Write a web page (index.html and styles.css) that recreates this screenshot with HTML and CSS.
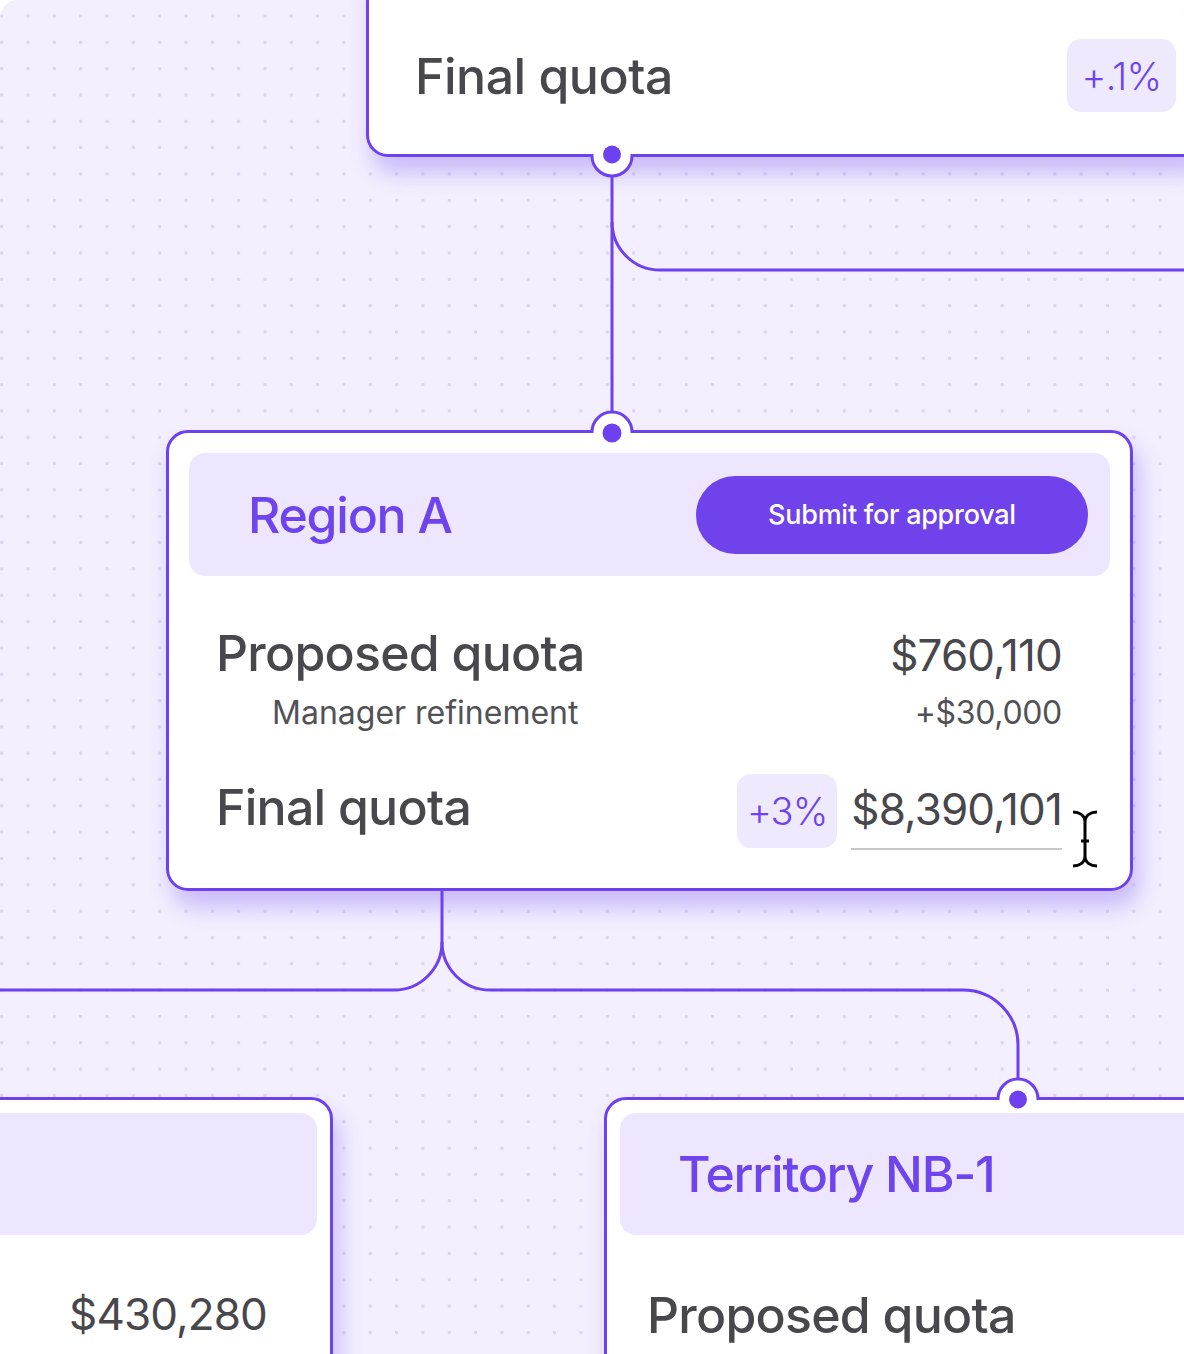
FILE: index.html
```html
<!DOCTYPE html>
<html lang="en">
<head>
<meta charset="utf-8">
<title>Quota flow</title>
<link rel="stylesheet" href="styles.css">
</head>
<body>
<div class="canvas">
  <svg class="wires" width="1184" height="1354" viewBox="0 0 1184 1354" aria-hidden="true">
    <path d="M612 155 V432" />
    <path d="M612 222 A48 48 0 0 0 660 270 H1200" />
    <path d="M442 889 V942 A48 48 0 0 1 394 990 H-20" />
    <path d="M442 942 A48 48 0 0 0 490 990 H963 A55 55 0 0 1 1018 1045 V1098" />
  </svg>

  <section class="card card-top">
    <h2 class="label label-top">Final quota</h2>
    <span class="badge badge-top">+.1%</span>
    <svg class="node node-down" width="50" height="50" viewBox="-25 -25 50 50" aria-hidden="true">
      <path d="M-20 0 A20 20 0 0 0 20 0 Z" fill="#fff"/>
      <rect x="-18.5" y="-2" width="37" height="4" fill="#fff"/>
      <path d="M-20 0 A20 20 0 0 0 20 0" fill="none" stroke="#6d41ef" stroke-width="3"/>
      <circle r="9" cy="-1.5" fill="#6d41ef"/>
    </svg>
  </section>

  <section class="card card-region">
    <svg class="node node-up node-region" width="50" height="50" viewBox="-25 -25 50 50" aria-hidden="true">
      <path d="M-20 0 A20 20 0 0 1 20 0 Z" fill="#fff"/>
      <rect x="-18.5" y="-2" width="37" height="4" fill="#fff"/>
      <path d="M-20 0 A20 20 0 0 1 20 0" fill="none" stroke="#6d41ef" stroke-width="3"/>
      <circle r="9.5" cy="1" fill="#6d41ef"/>
    </svg>
    <header class="card-head head-region">
      <h3 class="head-title">Region A</h3>
      <button class="btn" type="button">Submit for approval</button>
    </header>
    <div class="rows">
      <div class="row row-a">
        <span class="label">Proposed quota</span>
        <span class="value">$760,110</span>
      </div>
      <div class="row row-b">
        <span class="sub">Manager refinement</span>
        <span class="sub-value">+$30,000</span>
      </div>
      <div class="row row-c">
        <span class="label">Final quota</span>
        <span class="final-val">
          <span class="badge badge-final">+3%</span>
          <span class="value editable">$8,390,101</span>
          <svg class="ibeam" width="28" height="60" viewBox="0 0 28 60" aria-hidden="true">
            <path d="M2 3 C8 3 14 6 14 13 C14 6 20 3 26 3 M14 13 V47 M10 32 H18 M2 57 C8 57 14 54 14 47 C14 54 20 57 26 57" fill="none" stroke="#000" stroke-width="3"/>
          </svg>
        </span>
      </div>
    </div>
  </section>

  <section class="card card-left">
    <header class="card-head head-small"></header>
    <div class="left-body">
      <span class="value">$430,280</span>
    </div>
  </section>

  <section class="card card-territory">
    <svg class="node node-up node-territory" width="50" height="50" viewBox="-25 -25 50 50" aria-hidden="true">
      <path d="M-20 0 A20 20 0 0 1 20 0 Z" fill="#fff"/>
      <rect x="-18.5" y="-2" width="37" height="4" fill="#fff"/>
      <path d="M-20 0 A20 20 0 0 1 20 0" fill="none" stroke="#6d41ef" stroke-width="3"/>
      <circle r="9" cy="0.5" fill="#6d41ef"/>
    </svg>
    <header class="card-head head-small head-territory">
      <h3 class="head-title">Territory NB-1</h3>
    </header>
    <div class="territory-body">
      <span class="label">Proposed quota</span>
    </div>
  </section>
</div>
</body>
</html>
```

FILE: styles.css
```css
html, body {
  margin: 0;
  padding: 0;
  background: #ffffff;
}

body {
  font-family: "Inter", "Noto Sans", "Liberation Sans", sans-serif;
}

.canvas {
  position: relative;
  z-index: 0;
  width: 1184px;
  height: 1354px;
  overflow: hidden;
  border-radius: 18px 18px 0 0;
  background-color: #f3effe;
  background-image: radial-gradient(circle at center, #ddd2f2 0, #ddd2f2 1.4px, transparent 2px);
  background-size: 26.33px 26.33px;
  background-position: -11.47px 2.83px;
}

.wires {
  position: absolute;
  left: 0;
  top: 0;
}

.wires path {
  fill: none;
  stroke: #6d41ef;
  stroke-width: 3;
}

.card {
  position: absolute;
  box-sizing: border-box;
  background: #ffffff;
  border: 3px solid #6d41ef;
  border-radius: 22px;
}

.card::before {
  content: "";
  position: absolute;
  inset: -3px;
  border-radius: inherit;
  box-shadow: 6px 16px 22px rgba(110, 66, 240, 0.30);
  z-index: -1;
}

.node {
  position: absolute;
  display: block;
}

.node-down {
  left: 218px;
  bottom: -26.5px;
}

.node-region {
  left: 418px;
  top: -26.5px;
}

.node-territory {
  left: 386px;
  top: -26.5px;
}

.label {
  margin: 0;
  font-size: 50px;
  line-height: 56px;
  font-weight: 500;
  letter-spacing: -0.015em;
  color: #48474c;
}

.label-top {
  letter-spacing: -0.01em;
}

.value {
  font-size: 44px;
  line-height: 56px;
  font-weight: 400;
  letter-spacing: -0.02em;
  color: #48474c;
}

.badge {
  display: inline-flex;
  align-items: center;
  justify-content: center;
  box-sizing: border-box;
  background: #efe9fe;
  border-radius: 14px;
  color: #6e44ee;
  font-weight: 300;
  letter-spacing: -0.02em;
}

/* Top card */
.card-top {
  left: 366px;
  top: -40px;
  width: 840px;
  height: 197px;
  display: flex;
  align-items: center;
  justify-content: space-between;
  padding: 40px 27px 6px 46px;
}

.badge-top {
  width: 109px;
  height: 73px;
  font-size: 38px;
}

/* Region card */
.card-region {
  left: 166px;
  top: 430px;
  width: 967px;
  height: 461px;
  padding: 20px;
}

.card-head {
  display: flex;
  align-items: center;
  justify-content: space-between;
  box-sizing: border-box;
  background: #ede6fe;
  border-radius: 16px;
}

.head-region {
  height: 123px;
  padding: 0 22px 0 59px;
}

.head-title {
  margin: 0;
  font-size: 50px;
  line-height: 56px;
  font-weight: 500;
  letter-spacing: -0.025em;
  color: #6e44ee;
}

.btn {
  width: 392px;
  height: 78px;
  border: none;
  border-radius: 39px;
  background: #7042ec;
  color: #ffffff;
  font-family: inherit;
  font-size: 27px;
  font-weight: 500;
  letter-spacing: -0.01em;
  padding: 0;
}

.rows {
  padding: 0 48px 0 27px;
}

.row {
  display: flex;
  justify-content: space-between;
  align-items: baseline;
}

.row-a {
  margin-top: 49px;
}

.row-b {
  margin-top: 10px;
}

.sub {
  padding-left: 56px;
  font-size: 32px;
  line-height: 40px;
  font-weight: 400;
  letter-spacing: 0;
  color: #525156;
}

.sub-value {
  font-size: 32px;
  line-height: 40px;
  font-weight: 400;
  letter-spacing: -0.01em;
  color: #525156;
}

.row-c {
  margin-top: 41px;
}

.final-val {
  position: relative;
  display: flex;
  align-items: baseline;
  gap: 14px;
}

.badge-final {
  width: 100px;
  height: 74px;
  font-size: 38px;
}

.editable {
  line-height: 48px;
  padding-bottom: 15px;
  border-bottom: 2px solid #c9c9cc;
}

.ibeam {
  position: absolute;
  left: calc(100% + 9px);
  top: 35px;
}

/* Bottom cards */
.card-left {
  left: -200px;
  top: 1097px;
  width: 533px;
  height: 400px;
  padding: 13px;
}

.head-small {
  height: 122px;
}

.left-body {
  display: flex;
  justify-content: flex-end;
  padding: 51px 50px 0 0;
}

.card-territory {
  left: 604px;
  top: 1097px;
  width: 640px;
  height: 400px;
  padding: 13px;
}

.head-territory {
  padding-left: 58px;
}

.territory-body {
  padding: 52px 0 0 27px;
}
```
